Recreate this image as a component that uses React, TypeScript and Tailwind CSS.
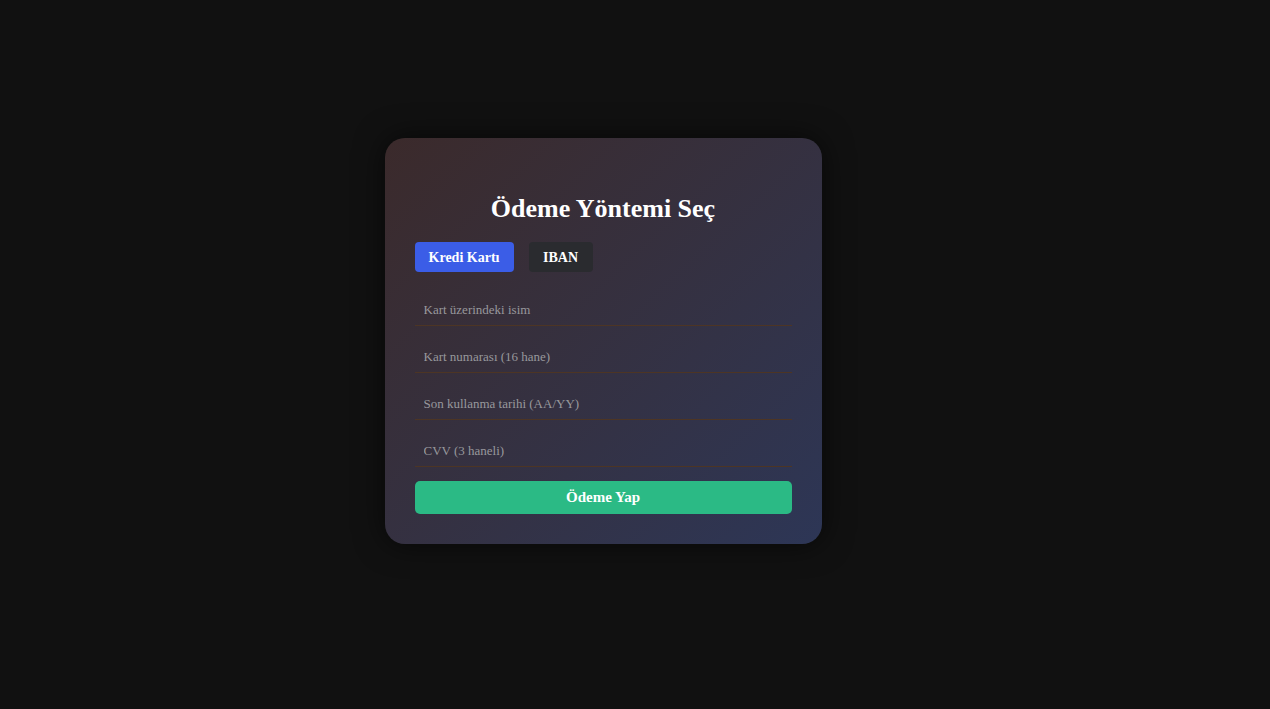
export default function App() {
  const fields = [
    "Kart üzerindeki isim",
    "Kart numarası (16 hane)",
    "Son kullanma tarihi (AA/YY)",
    "CVV (3 haneli)",
  ];
  return (
    <div className="flex h-[709px] w-full items-start justify-center bg-[#111111] pr-[64px] pt-[138px] font-['Liberation_Serif',serif]">
      <div className="flex w-[437px] flex-col rounded-[20px] bg-gradient-to-br from-[#3b2a2b] to-[#2d3656] p-[30px] shadow-[0_0_30px_rgba(0,0,0,0.6)]">
        <h2 className="mb-[17px] mt-[25px] h-[32px] text-center text-[26px] font-bold leading-[32px] text-white">
          Ödeme Yöntemi Seç
        </h2>
        <div className="flex gap-[15px]">
          <button className="h-[30px] w-[99px] rounded-[4px] bg-[#3b5de7] text-[14px] font-bold text-white">
            Kredi Kartı
          </button>
          <button className="h-[30px] w-[64px] rounded-[4px] bg-[#2a2b2f] text-[14px] font-bold text-white">
            IBAN
          </button>
        </div>
        <div className="mt-[19px] flex flex-col gap-[12px]">
          {fields.map((f) => (
            <input
              key={f}
              placeholder={f}
              className="h-[35px] w-full border-b border-[#4d3524] bg-transparent px-[9px] pt-[4px] text-[13px] text-white outline-none placeholder:text-[#98989c]"
            />
          ))}
        </div>
        <button className="mt-[14px] h-[33px] w-full rounded-[5px] bg-[#2bba85] text-[15px] font-bold text-white">
          Ödeme Yap
        </button>
      </div>
    </div>
  );
}
